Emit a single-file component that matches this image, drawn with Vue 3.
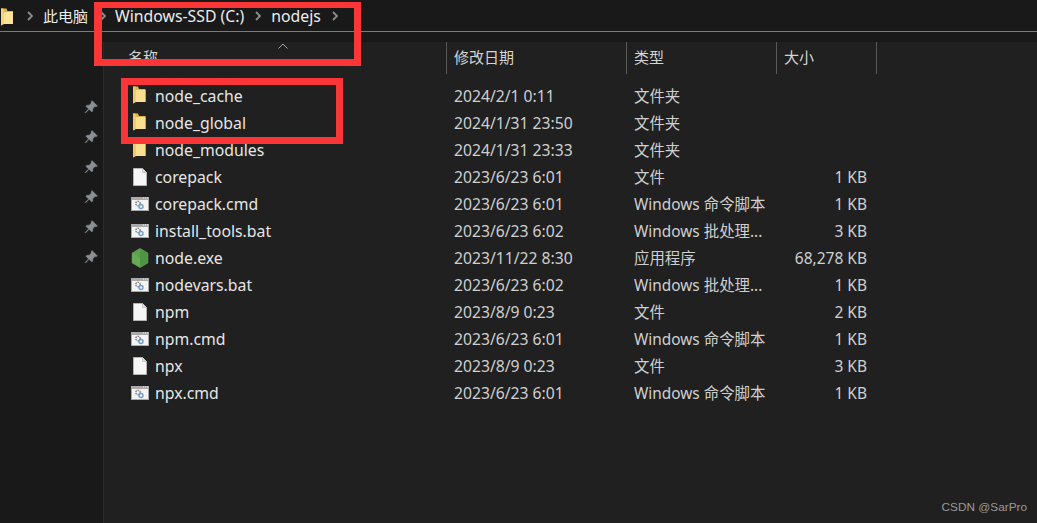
<script setup>
const columns = ['修改日期', '类型', '大小']
const pins = [0, 1, 2, 3, 4, 5]
const rows = [
  { name: 'node_cache', icon: 'folder', date: '2024/2/1 0:11', type: '文件夹', size: '' },
  { name: 'node_global', icon: 'folder', date: '2024/1/31 23:50', type: '文件夹', size: '' },
  { name: 'node_modules', icon: 'folder', date: '2024/1/31 23:33', type: '文件夹', size: '' },
  { name: 'corepack', icon: 'file', date: '2023/6/23 6:01', type: '文件', size: '1 KB' },
  { name: 'corepack.cmd', icon: 'script', date: '2023/6/23 6:01', type: 'Windows 命令脚本', size: '1 KB' },
  { name: 'install_tools.bat', icon: 'script', date: '2023/6/23 6:02', type: 'Windows 批处理...', size: '3 KB' },
  { name: 'node.exe', icon: 'node', date: '2023/11/22 8:30', type: '应用程序', size: '68,278 KB' },
  { name: 'nodevars.bat', icon: 'script', date: '2023/6/23 6:02', type: 'Windows 批处理...', size: '1 KB' },
  { name: 'npm', icon: 'file', date: '2023/8/9 0:23', type: '文件', size: '2 KB' },
  { name: 'npm.cmd', icon: 'script', date: '2023/6/23 6:01', type: 'Windows 命令脚本', size: '1 KB' },
  { name: 'npx', icon: 'file', date: '2023/8/9 0:23', type: '文件', size: '3 KB' },
  { name: 'npx.cmd', icon: 'script', date: '2023/6/23 6:01', type: 'Windows 命令脚本', size: '1 KB' },
]
</script>

<template>
  <div class="window">
    <header class="crumbs">
      <svg class="crumb-folder" width="14" height="18" viewBox="0 0 14 18">
        <path d="M1 0.500h5.500l1 2.500H13v13H4l-3 1.500z" fill="#e3b548" />
        <path d="M3.500 4H13v12H3.500z" fill="#fde49a" />
        <path d="M1 0.500h2.500V16L1 17.500z" fill="#f8d56f" />
      </svg>
      <svg class="chev c1" width="6" height="10" viewBox="0 0 6 10"><path d="M1 1l4 4-4 4" /></svg>
      <span class="crumb cjk c2">此电脑</span>
      <svg class="chev c3" width="6" height="10" viewBox="0 0 6 10"><path d="M1 1l4 4-4 4" /></svg>
      <span class="crumb c4">Windows-SSD (C:)</span>
      <svg class="chev c5" width="6" height="10" viewBox="0 0 6 10"><path d="M1 1l4 4-4 4" /></svg>
      <span class="crumb c6">nodejs</span>
      <svg class="chev c7" width="6" height="10" viewBox="0 0 6 10"><path d="M1 1l4 4-4 4" /></svg>
    </header>

    <div class="body">
      <aside class="side">
        <svg v-for="p in pins" :key="p" class="pin" width="14" height="14" viewBox="0 0 14 14">
          <path d="M8 0.500l5.500 5.500-1.500 0.800-1-0.300-2.200 2.200 0 2.300-1 1-2.700-2.700L1.500 13 1 12.500l3.500-3.600L1.800 6.200l1-1 2.300 0 2.200-2.200-0.300-1z" />
        </svg>
      </aside>

      <main class="pane">
        <div class="head">
          <div class="hcell hname">名称</div>
          <div v-for="c in columns" :key="c" class="hcell">{{ c }}</div>
          <svg class="caret" width="10" height="6" viewBox="0 0 10 6"><path d="M0.500 5.500L5 1l4.500 4.500" /></svg>
        </div>

        <div class="list">
          <div v-for="r in rows" :key="r.name" class="row">
            <div class="cname">
              <span class="ico">
                <svg v-if="r.icon === 'folder'" class="ico-folder" width="18" height="18" viewBox="0 0 18 18">
                  <path d="M2 0.500h5l1 2.500H14.500v13H5l-3 1.500z" fill="#e3b548" />
                  <path d="M4.500 4H14.500v12H4.500z" fill="#fbdf90" />
                  <path d="M2 0.500h2.500V16L2 17.500z" fill="#f3cb60" />
                </svg>
                <svg v-else-if="r.icon === 'file'" width="18" height="18" viewBox="0 0 18 18">
                  <path d="M2.500 0.500h9l4 4v13h-13z" fill="#f6f6f6" stroke="#b4b4b4" />
                  <path d="M11.500 0.500v4h4" fill="#e2e2e2" stroke="#c4c4c4" />
                </svg>
                <svg v-else-if="r.icon === 'script'" width="18" height="14" viewBox="0 0 18 14">
                  <path d="M0 0h18v14H0z" fill="#a9a9a9" />
                  <path d="M1 3h16v10H1z" fill="#f4f4f4" />
                  <path d="M12 1h1M14 1h1M16 1h1" stroke="#f0f0f0" />
                  <circle cx="7" cy="6.500" r="2.200" fill="none" stroke="#8a8a8a" stroke-width="1.500" stroke-dasharray="1.500 0.700" />
                  <circle cx="10" cy="9.500" r="2" fill="none" stroke="#6f9fce" stroke-width="1.400" />
                </svg>
                <svg v-else width="18" height="20" viewBox="0 0 18 20">
                  <path d="M9 1l7.500 4.300v9.400L9 19l-7.500-4.300V5.300z" fill="#5fa04e" stroke="#5fa04e" stroke-width="1.500" stroke-linejoin="round" />
                  <path d="M9 1l7.500 4.300v9.400L9 19z" fill="#4f9440" />
                  <path d="M1.500 5.300L9 10v9l-7.500-4.300z" fill="#66ab54" />
                </svg>
              </span>
              <span class="fname">{{ r.name }}</span>
            </div>
            <div class="cell cdate">{{ r.date }}</div>
            <div class="cell">{{ r.type }}</div>
            <div class="cell csize">{{ r.size }}</div>
          </div>
        </div>
      </main>
    </div>

    <div class="mark mark-crumbs"></div>
    <div class="mark mark-rows"></div>
    <div class="watermark">CSDN @SarPro</div>
  </div>
</template>

<style>
html, body { margin: 0; background: #191919; }
</style>

<style scoped>
.window {
  position: relative;
  width: 1037px;
  height: 523px;
  overflow: hidden;
  background: #191919;
  font-family: "Noto Sans", "Noto Sans CJK SC", sans-serif;
  font-size: 15.8px;
  color: #d9d9d9;
  display: flex;
  flex-direction: column;
}
.crumbs {
  height: 32px;
  flex: none;
  box-sizing: border-box;
  border-bottom: 1px solid #7b7b7b;
  display: flex;
  align-items: center;
  color: #ececec;
}
.crumb-folder { margin-top: 3px; }
.chev { flex: none; }
.chev path { fill: none; stroke: #8c8c8c; stroke-width: 1.800; }
.cjk { font-size: 15px; }
.c1 { margin-left: 13px; }
.c2 { margin-left: 10px; }
.c3 { margin-left: 12px; }
.c4 { margin-left: 9px; }
.c5 { margin-left: 11px; }
.c6 { margin-left: 10px; }
.c7 { margin-left: 11px; }
.body { flex: 1; display: flex; min-height: 0; }
.side {
  width: 104px;
  flex: none;
  box-sizing: border-box;
  padding: 68px 6px 0 0;
  display: flex;
  flex-direction: column;
  align-items: flex-end;
  gap: 16px;
}
.pin path { fill: #8b8f94; stroke: #8b8f94; stroke-width: 0.400; }
.pane {
  flex: 1;
  margin-top: 10px;
  background: #202020;
  border-left: 1px solid #2b2b2b;
  margin-left: -1px;
}
.head {
  position: relative;
  height: 32px;
  display: grid;
  grid-template-columns: 343px 180px 150px 100px;
  color: #d4d4d4;
  font-size: 15px;
}
.hcell {
  border-right: 1px solid #5a5a5a;
  padding-left: 7px;
  line-height: 31px;
}
.hname { padding-left: 24px; }
.caret { position: absolute; left: 174px; top: 1px; }
.caret path { fill: none; stroke: #a8a8a8; }
.list { padding-top: 8px; }
.row {
  height: 27px;
  display: grid;
  grid-template-columns: 343px 180px 150px 100px;
  align-items: center;
}
.cname { display: flex; align-items: center; padding-left: 27px; }
.ico { width: 24px; display: flex; align-items: center; flex: none; }
.ico-folder { margin-top: -2px; }
.fname { color: #e6e6e6; white-space: nowrap; }
.cell { padding-left: 7px; white-space: nowrap; color: #cfcfcf; font-size: 15.4px; }
.cdate { font-size: 15.7px; }
.csize { text-align: right; padding-right: 10px; font-size: 15.5px; }
.mark {
  position: absolute;
  box-sizing: border-box;
  border: 7px solid #fc3636;
}
.mark-crumbs { left: 94px; top: 2px; width: 267px; height: 64px; border-left-width: 8px; border-top-width: 6px; }
.mark-rows { left: 121px; top: 78px; width: 222px; height: 66px; }
.watermark {
  position: absolute;
  right: 10px;
  bottom: 9px;
  font-family: "Liberation Sans", sans-serif;
  font-size: 11.8px;
  color: #9a9a9a;
}
</style>
